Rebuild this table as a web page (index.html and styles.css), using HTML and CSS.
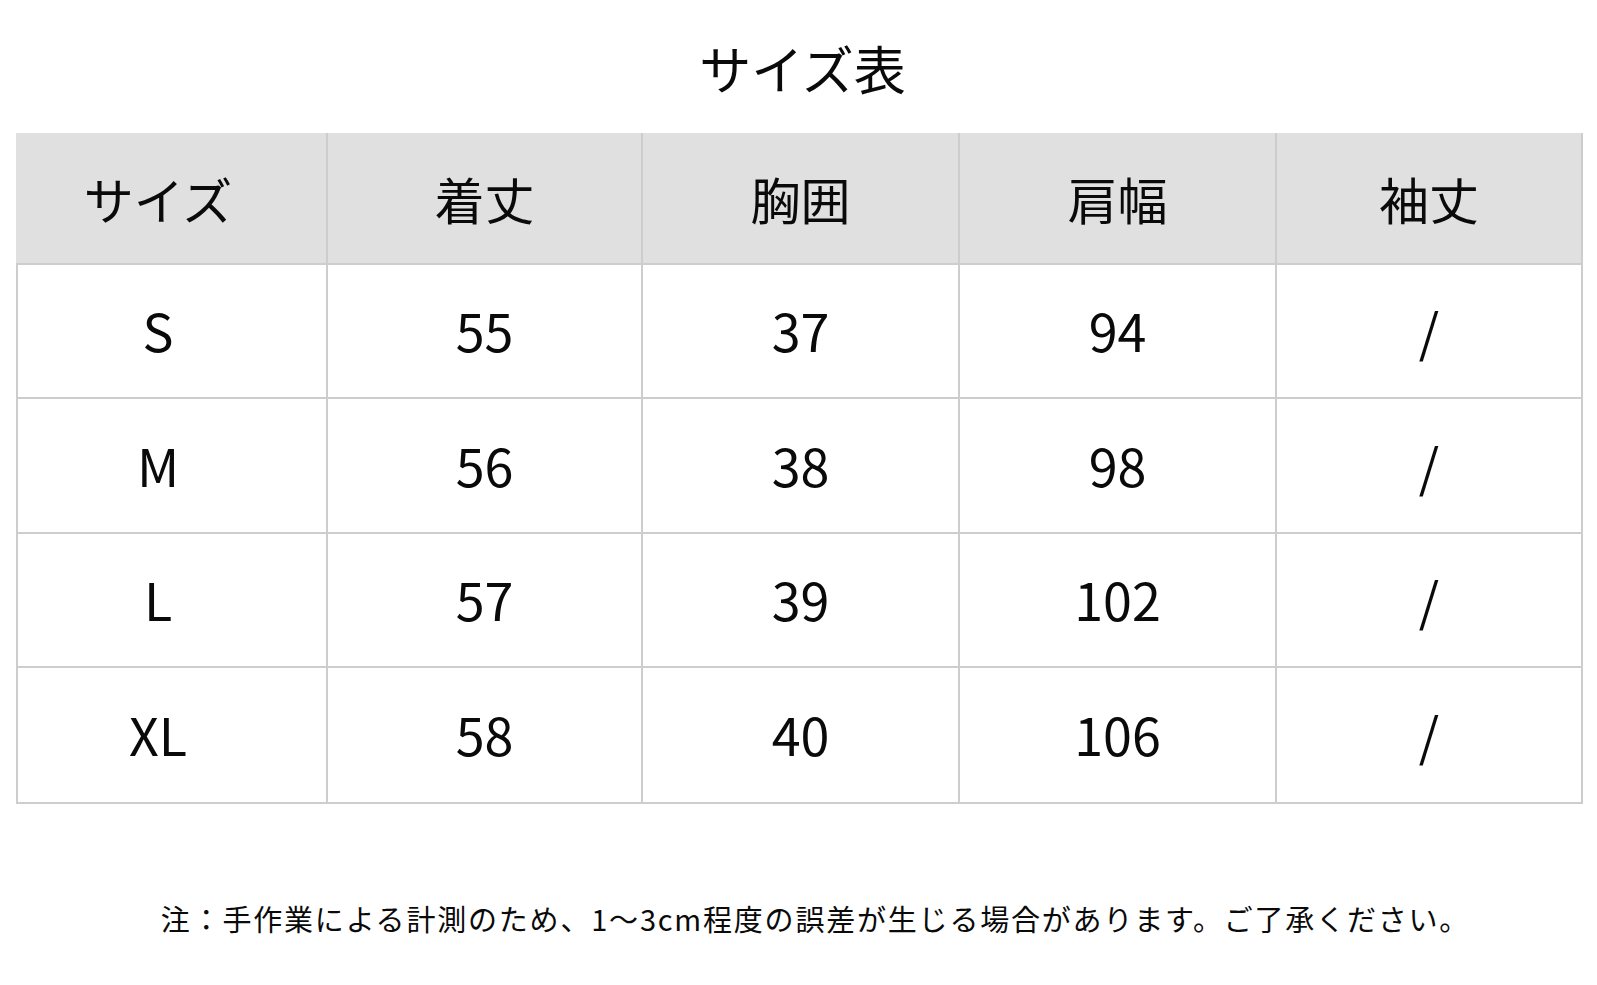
FILE: index.html
```html
<!DOCTYPE html>
<html lang="ja">
<head>
<meta charset="utf-8">
<title>サイズ表</title>
<link rel="stylesheet" href="styles.css">
</head>
<body>
<div class="page">
  <h1 class="title">サイズ表</h1>
  <table class="size-table">
    <colgroup>
      <col class="c1"><col class="c2"><col class="c3"><col class="c4"><col class="c5">
    </colgroup>
    <thead>
      <tr><th class="first">サイズ</th><th>着丈</th><th>胸囲</th><th>肩幅</th><th>袖丈</th></tr>
    </thead>
    <tbody>
      <tr class="r1"><td class="first">S</td><td>55</td><td>37</td><td>94</td><td>/</td></tr>
      <tr class="r2"><td class="first">M</td><td>56</td><td>38</td><td>98</td><td>/</td></tr>
      <tr class="r3"><td class="first">L</td><td>57</td><td>39</td><td>102</td><td>/</td></tr>
      <tr class="r4"><td class="first">XL</td><td>58</td><td>40</td><td>106</td><td>/</td></tr>
    </tbody>
  </table>
  <p class="note">注：手作業による計測のため、1～3cm程度の誤差が生じる場合があります。ご了承ください。</p>
</div>
</body>
</html>
```

FILE: styles.css
```css
html, body {
  margin: 0;
  padding: 0;
  background: #ffffff;
}
body {
  width: 1597px;
  height: 985px;
  overflow: hidden;
  font-family: "Noto Sans CJK JP", "Noto Sans", sans-serif;
  color: #0a0a0a;
}
.page {
  display: flex;
  flex-direction: column;
  align-items: flex-start;
}
.title {
  align-self: stretch;
  margin: 0;
  height: 133px;
  display: flex;
  align-items: center;
  justify-content: center;
  padding-left: 8px;
  box-sizing: border-box;
  font-size: 52px;
  font-weight: 400;
  line-height: 1;
  padding-top: 3px;
}
.size-table {
  margin-left: 16px;
  width: 1565px;
  table-layout: fixed;
  border-collapse: collapse;
  border: 2px solid #cdcdcd;
}
.c1 { width: 310px; }
.c2 { width: 315px; }
.c3 { width: 317px; }
.c4 { width: 317px; }
.c5 { width: 306px; }
.size-table th,
.size-table td {
  border: 2px solid #cdcdcd;
  text-align: center;
  vertical-align: middle;
  padding: 0;
  font-weight: 400;
  box-sizing: border-box;
}
.size-table thead th {
  background: #e0e0e0;
  height: 130px;
  font-size: 50px;
  line-height: 1;
  padding-bottom: 3px;
  border-top-color: #e0e0e0;
  border-left-color: #e0e0e0;
}
.size-table thead th + th {
  border-left-color: #cdcdcd;
}
.size-table tbody td {
  height: 134px;
  font-size: 52px;
  line-height: 1;
  padding-bottom: 2px;
}
.size-table .r2 td { height: 135px; }
.size-table .r4 td { height: 136px; }
.size-table .first {
  padding-right: 28px;
}
.note {
  align-self: stretch;
  margin: 94px 0 0 0;
  text-align: center;
  padding-left: 34px;
  font-size: 29px;
  line-height: 40px;
  letter-spacing: 1.8px;
}
```
